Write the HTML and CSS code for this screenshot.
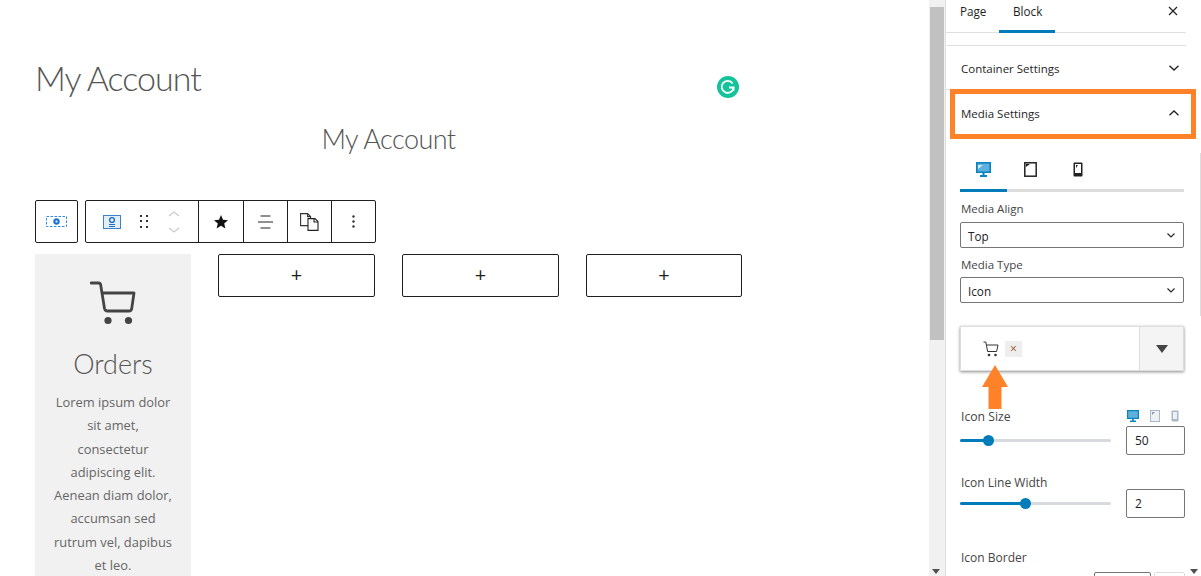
FILE: index.html
```html
<!DOCTYPE html>
<html lang="en">
<head>
<meta charset="utf-8">
<title>My Account</title>
<link rel="stylesheet" href="styles.css">
</head>
<body>
<div class="app">
  <main class="editor">
    <h1 class="page-title">My Account</h1>
    <h2 class="sub-title">My Account</h2>
    <div class="grammarly"><svg viewBox="0 0 22 22" width="22" height="22"><circle cx="11" cy="11" r="11" fill="#15c39a"/><path d="M15.600 7.500a6 6 0 1 0 1 4h-4.600" fill="none" stroke="#fff" stroke-width="1.800"/><path d="M16.600 11.400v3.400" stroke="#fff" stroke-width="1.600"/></svg></div>
    <div class="toolbar-row">
      <div class="tool-group single">
        <svg width="22" height="12" viewBox="0 0 22 12"><rect x=".5" y=".5" width="20" height="10" fill="none" stroke="#2c8ae0" stroke-dasharray="2.500 1.500"/><circle cx="10.500" cy="5.500" r="3.200" fill="#1e78d6"/><circle cx="10.500" cy="5.500" r="1" fill="#fff"/></svg>
      </div>
      <div class="tool-group">
        <div class="tool tool-multi">
          <svg width="18" height="14" viewBox="0 0 18 14"><rect x=".5" y=".5" width="17" height="13" fill="#e4eefa" stroke="#3b82c9"/><circle cx="9" cy="5" r="2.400" fill="none" stroke="#1f6fbf" stroke-width="1.400"/><path d="M6 9.500h6M6 11.500h6" stroke="#1f6fbf"/></svg>
          <svg width="8" height="13" viewBox="0 0 8 13"><g fill="#333"><rect x="0" y="0" width="2" height="2"/><rect x="6" y="0" width="2" height="2"/><rect x="0" y="5" width="2" height="2"/><rect x="6" y="5" width="2" height="2"/><rect x="0" y="11" width="2" height="2"/><rect x="6" y="11" width="2" height="2"/></g></svg>
          <svg width="12" height="22" viewBox="0 0 12 22"><path d="M1 5l5-4 5 4M1 17l5 4 5-4" fill="none" stroke="#ccc" stroke-width="1.300"/></svg>
        </div>
        <div class="tool tool-star"><svg width="14" height="14" viewBox="0 0 14 14"><path d="M7 0l2 4.800 5 .4-3.800 3.300 1.200 5L7 10.800l-4.400 2.700 1.200-5L0 5.200l5-.4z" fill="#111"/></svg></div>
        <div class="tool tool-align"><svg width="15" height="14" viewBox="0 0 15 14"><path d="M2.500 1h10M0 7h15M2.500 13h10" stroke="#222" stroke-width="1.200"/></svg></div>
        <div class="tool tool-copy"><svg width="19" height="18" viewBox="0 0 19 18"><path d="M.6.6h7l3 3v9h-10zM7.600.6v3h3" fill="#fff" stroke="#333" stroke-width="1.100"/><path d="M8 5.600h7l3 3v8.800H8z" fill="#fff" stroke="#222" stroke-width="1.100"/><path d="M14 5.600v3.400h4" fill="none" stroke="#222" stroke-width="1.100"/></svg></div>
        <div class="tool tool-more"><svg width="3" height="13" viewBox="0 0 3 13"><circle cx="1.500" cy="1.500" r="1.200" fill="#333"/><circle cx="1.500" cy="6.500" r="1.200" fill="#333"/><circle cx="1.500" cy="11.500" r="1.200" fill="#333"/></svg></div>
      </div>
    </div>
    <div class="columns">
      <article class="card">
        <svg class="card-cart" width="46" height="44" viewBox="0 0 46 44"><path d="M1 2h7.500c1.300 0 2 .8 2.200 2l3.800 23.500c.3 1.500 1.300 2.500 3 2.500h21.500c1.500 0 2.500-.9 2.700-2.400L44 12H12" fill="none" stroke="#444" stroke-width="2.800" stroke-linecap="round" stroke-linejoin="round"/><circle cx="18" cy="39.500" r="3.600" fill="#444"/><circle cx="38.500" cy="39.500" r="3.600" fill="#444"/></svg>
        <h3 class="card-title">Orders</h3>
        <p class="card-text">Lorem ipsum dolor sit amet, consectetur adipiscing elit. Aenean diam dolor, accumsan sed rutrum vel, dapibus et leo.</p>
      </article>
      <button class="add-btn">+</button>
      <button class="add-btn">+</button>
      <button class="add-btn">+</button>
    </div>
  </main>
  <div class="scrollbar main-scroll"><span class="thumb"></span><span class="arrow"></span></div>
  <aside class="sidebar">
    <div class="tabs">
      <span class="tab">Page</span>
      <span class="tab active">Block</span>
      <svg class="close" width="10" height="10" viewBox="0 0 10 10"><path d="M1 1l8 8M9 1l-8 8" stroke="#222" stroke-width="1.200"/></svg>
    </div>
    <div class="tabs-gap"></div>
    <div class="section-head container-head"><span>Container Settings</span><svg width="10" height="6" viewBox="0 0 10 6"><path d="M.5.800L5 5l4.500-4.200" fill="none" stroke="#222" stroke-width="1.300"/></svg></div>
    <div class="section-head media-head"><span>Media Settings</span><svg width="10" height="6" viewBox="0 0 10 6"><path d="M.5 5.200L5 1l4.500 4.200" fill="none" stroke="#222" stroke-width="1.300"/></svg></div>
    <div class="section-body">
      <div class="device-tabs">
        <span class="device-tab current"><svg width="15" height="15" viewBox="0 0 15 15"><rect x=".8" y=".8" width="13.400" height="9.400" fill="#5fb0dc" stroke="#0a84c1" stroke-width="1.600"/><path d="M2 7l5-4H2z" fill="#d5ebf6"/><path d="M4 14h7M7.500 10v4" stroke="#0a84c1" stroke-width="2"/></svg></span>
        <span class="device-tab"><svg width="13" height="15" viewBox="0 0 13 15"><rect x=".8" y=".8" width="11.400" height="13.400" fill="#fff" stroke="#222" stroke-width="1.500"/><path d="M2 2h4l-4 3z" fill="#222"/></svg></span>
        <span class="device-tab"><svg width="10" height="15" viewBox="0 0 10 15"><rect x=".5" y=".5" width="9" height="14" rx="1" fill="#222"/><rect x="2" y="2" width="6" height="9" fill="#fff"/><path d="M3 3h2L3 6z" fill="#222"/></svg></span>
      </div>
      <label class="field-label first">Media Align</label>
      <div class="select"><span>Top</span><svg width="8" height="5" viewBox="0 0 8 5"><path d="M.5.500L4 4l3.500-3.500" fill="none" stroke="#222" stroke-width="1.100"/></svg></div>
      <label class="field-label second">Media Type</label>
      <div class="select"><span>Icon</span><svg width="8" height="5" viewBox="0 0 8 5"><path d="M.5.500L4 4l3.500-3.500" fill="none" stroke="#222" stroke-width="1.100"/></svg></div>
      <div class="icon-picker">
        <div class="picked">
          <svg width="16" height="16" viewBox="0 0 16 16"><path d="M.5 1h2.300l1.800 9.500h9L15 4H3.500" fill="none" stroke="#333" stroke-width="1"/><circle cx="6" cy="14" r="1.300" fill="#333"/><circle cx="12.500" cy="14" r="1.300" fill="#333"/></svg>
          <span class="remove">×</span>
        </div>
        <div class="picker-toggle"><span class="tri"></span></div>
      </div>
      <div class="size-head"><span class="ctl-label">Icon Size</span>
        <span class="mini-devices">
          <svg width="12" height="12" viewBox="0 0 12 12"><rect x=".6" y=".6" width="10.800" height="7.800" fill="#5fb0dc" stroke="#0a84c1" stroke-width="1.200"/><path d="M3 11.300h6M6 8v3" stroke="#0a84c1" stroke-width="1.600"/></svg>
          <svg width="10" height="12" viewBox="0 0 10 12"><rect x=".5" y=".5" width="9" height="11" fill="#eef1f4" stroke="#a9b8c6"/><path d="M2 2h3L2 5z" fill="#8a9aa8"/></svg>
          <svg width="8" height="12" viewBox="0 0 8 12"><rect x=".5" y=".5" width="7" height="11" rx="1" fill="#a9b8c6"/><rect x="2" y="2" width="4" height="7" fill="#eef1f4"/></svg>
        </span>
      </div>
      <div class="slider-row"><div class="slider"><span class="fill fill-size"></span></div><div class="num">50</div></div>
      <div class="ctl-label width-label">Icon Line Width</div>
      <div class="slider-row second-slider"><div class="slider"><span class="fill fill-width"></span></div><div class="num">2</div></div>
      <div class="border-row"><span class="ctl-label">Icon Border</span><span class="border-select"></span><span class="border-reset"></span></div>
    </div>
    <div class="side-scroll"><span class="side-thumb"></span><span class="arrow"></span></div>
  </aside>
</div>
<div class="mark-box"></div>
<svg class="mark-arrow" width="26" height="44" viewBox="0 0 26 44"><path d="M13 0l13 22h-6.500v22h-13V22H0z" fill="#ff8228"/></svg>
</body>
</html>
```
FILE: styles.css
```css
* { box-sizing: border-box; }
html, body { margin: 0; height: 576px; overflow: hidden; background: #fff; }
body { font-family: "Open Sans", "Noto Sans", sans-serif; color: #1e1e1e; }
.app { display: flex; width: 1201px; height: 576px; }

.editor { width: 929px; padding: 0 0 0 35px; position: relative; flex: none; }
.page-title { margin: 57px 0 0; height: 42px; font: 300 34px/42px Lato, sans-serif; color: #555; letter-spacing: -1px; }
.sub-title { margin: 20px 0 0; width: 707px; height: 40px; text-align: center; font: 300 27px/40px Lato, sans-serif; color: #555; letter-spacing: -.55px; }
.grammarly { position: absolute; left: 717px; top: 76px; width: 22px; height: 22px; }
.grammarly svg { display: block; }

.toolbar-row { display: flex; gap: 7px; margin-top: 41px; height: 43px; }
.tool-group { display: flex; height: 43px; border: 1px solid #1e1e1e; border-radius: 2px; background: #fff; }
.tool-group.single { width: 43px; align-items: center; justify-content: center; }
.tool { display: flex; align-items: center; justify-content: center; border-left: 1px solid #1e1e1e; height: 41px; }
.tool-multi { border-left: 0; width: 112px; justify-content: flex-start; padding-left: 17px; }
.tool-multi svg:nth-child(2) { margin-left: 19px; }
.tool-multi svg:nth-child(3) { margin-left: 20px; }
.tool-star { width: 45px; }
.tool-align { width: 44px; }
.tool-copy { width: 44px; }
.tool-more { width: 44px; }

.columns { display: flex; align-items: flex-start; margin-top: 11px; width: 707px; }
.card { width: 156px; height: 330px; background: #f1f1f1; padding: 27px 17px 0; text-align: center; flex: none; }
.card-cart { display: block; margin: 0 auto; }
.card-title { margin: 19px 0 0; font: 300 27px/40px Lato, sans-serif; color: #555; }
.card-text { margin: 7px 0 0; font: 400 12.900px/23.300px "Open Sans", sans-serif; color: #666; }
.add-btn { width: 157px; height: 43px; margin-left: 27px; flex: none; border: 1px solid #1e1e1e; border-radius: 2px; background: #fff; font: 400 20px/1 "Open Sans", sans-serif; color: #1e1e1e; padding: 0 0 2px; }
.add-btn:last-child { width: 156px; }

.scrollbar.main-scroll { width: 16px; flex: none; position: relative; background: #f1f1f1; }
.thumb { position: absolute; left: 1px; top: 7px; width: 14px; height: 333px; background: #c1c1c1; }
.main-scroll .arrow { left: 3px; }
.arrow { position: absolute; bottom: 2px; width: 0; height: 0; border: 4px solid transparent; border-top: 5px solid #505050; border-bottom: 0; }

.sidebar { flex: 1; position: relative; border-left: 1px solid #e0e0e0; overflow: hidden; }
.side-scroll { position: absolute; right: 0; top: 0; bottom: 0; width: 15px; background: #fff; }
.side-thumb { position: absolute; right: 0; top: 153px; width: 1px; height: 163px; background: #ddd; }
.side-scroll .arrow { right: 3px; }

.tabs { display: flex; align-items: flex-start; height: 33px; border-bottom: 1px solid #e0e0e0; padding-left: 14px; position: relative; font-size: 11.700px; color: #1e1e1e; }
.tab { line-height: 23px; }
.tab:first-child { width: 26px; }
.tab.active { margin-left: 13px; width: 56px; height: 33px; padding-left: 14px; border-bottom: 3px solid #007cba; }
.close { position: absolute; left: 222px; top: 6px; }
.tabs-gap { height: 12px; }
.section-head { display: flex; align-items: center; justify-content: space-between; padding: 0 22px 0 15px; font-size: 11.500px; color: #1e1e1e; }
.section-head span { font-weight: 500; }
.container-head { height: 45px; padding-top: 1px; border-top: 1px solid #e0e0e0; border-bottom: 1px solid #e0e0e0; }
.media-head { height: 48px; padding-bottom: 2px; }

.section-body { padding: 18px 0 0 14px; font-size: 12px; }
.device-tabs { display: flex; width: 224px; height: 36px; border-bottom: 3px solid #ddd; }
.device-tab { width: 47px; height: 36px; display: flex; justify-content: center; padding-top: 6px; margin-bottom: -3px; }
.device-tab.current { border-bottom: 3px solid #007cba; }
.field-label { display: block; font-size: 11.500px; line-height: 16px; color: #444; padding-left: 1px; }
.field-label.first { margin-top: 9px; }
.field-label.second { margin-top: 9px; margin-bottom: -1px; }
.select { display: flex; align-items: center; justify-content: space-between; width: 224px; height: 26px; margin-top: 5px; border: 1px solid #757575; border-radius: 2px; padding: 1px 8px 0 7px; font-size: 11.700px; color: #222; }
.icon-picker { display: flex; width: 224px; height: 45px; margin-top: 23px; background: #fff; border: 1px solid #ddd; box-shadow: 0 1px 3px rgba(0,0,0,.45); }
.picked { flex: 1; display: flex; align-items: center; padding-left: 22px; gap: 6px; }
.remove { width: 17px; height: 16px; background: #eee; color: #a0522d; font-size: 12px; line-height: 15px; text-align: center; }
.picker-toggle { width: 44px; background: #f4f4f4; border-left: 1px solid #ddd; display: flex; align-items: center; justify-content: center; }
.tri { width: 0; height: 0; border: 6px solid transparent; border-top: 8px solid #444; border-bottom: 0; }
.size-head { display: flex; justify-content: space-between; align-items: center; width: 224px; margin-top: 35px; height: 20px; padding-left: 1px; margin-bottom: -1px; }
.size-head .ctl-label { font-size: 12.200px; }
.ctl-label { font-size: 12px; color: #444; flex: none; }
.mini-devices { display: flex; gap: 11px; align-items: center; width: 57px; }
.slider-row { display: flex; align-items: center; width: 225px; gap: 15px; margin-top: 1px; }
.slider { position: relative; width: 151px; height: 3px; background: #d7dade; border-radius: 2px; flex: none; margin-top: -1px; }
.fill { display: block; height: 3px; background: #007cba; border-radius: 2px; position: relative; }
.fill-size { width: 28px; }
.fill-width { width: 65px; }
.fill::after { content: ""; position: absolute; right: -6px; top: -4px; width: 11px; height: 11px; border-radius: 50%; background: #007cba; }
.num { width: 59px; height: 29px; border: 1px solid #757575; border-radius: 2px; padding-left: 8px; font-size: 12px; line-height: 27px; color: #222; }
.width-label { margin-top: 18px; height: 17px; line-height: 20px; padding-left: 1px; }
.second-slider { margin-top: -1px; }
.border-row { display: flex; align-items: flex-start; width: 225px; margin-top: 31px; height: 40px; padding-left: 1px; }
.border-select { margin-left: auto; margin-top: 23px; width: 57px; height: 20px; border: 1px solid #757575; border-radius: 2px; }
.border-reset { margin-left: 3px; margin-top: 23px; width: 31px; height: 20px; border: 1px solid #ddd; border-radius: 2px; }

.mark-box { position: absolute; left: 950px; top: 89px; width: 246px; height: 50px; border: 5px solid #ff8228; }
.mark-arrow { position: absolute; left: 982px; top: 365px; }
```
